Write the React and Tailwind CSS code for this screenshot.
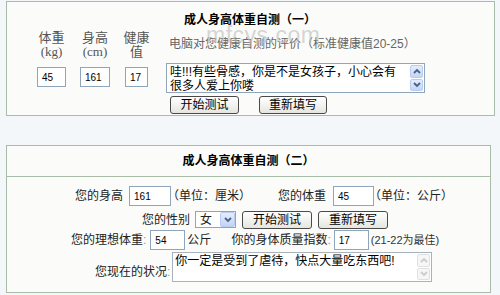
import React from "react";

const cjk = "[font-family:'Liberation_Sans','Noto_Sans_CJK_SC',sans-serif]";

const Input = ({ value, className = "" }) => (
  <div
    className={`h-[20px] border border-[#8ea5ba] bg-white flex items-center pl-[4px] text-[10px] text-black ${className}`}
  >
    {value}
  </div>
);

const Btn = ({ children, className = "" }) => (
  <div
    className={`h-[18px] rounded-[3px] border border-[#4a4a4a] bg-gradient-to-b from-white to-[#e6e6df] flex items-center justify-center text-[12px] leading-none text-black ${className}`}
  >
    {children}
  </div>
);

const Chevron = ({ up, color }) => (
  <svg width="8" height="6" viewBox="0 0 8 6">
    <path
      d={up ? "M1 5 L4 2 L7 5" : "M1 1 L4 4 L7 1"}
      fill="none"
      stroke={color}
      strokeWidth="1.8"
    />
  </svg>
);

const Scrollbar = ({ active }) => (
  <div className="w-[15px] flex flex-col gap-[1px] p-[1px]">
    {[true, false].map((up) => (
      <div
        key={up ? "u" : "d"}
        className={`flex-1 flex items-center justify-center rounded-[2px] border ${
          active
            ? "border-[#b9cdf2] bg-gradient-to-b from-[#e4edfc] to-[#c3d5f6]"
            : "border-[#e0e0e0] bg-[#f6f6f4]"
        }`}
      >
        <Chevron up={up} color={active ? "#4d6185" : "#c9ccd2"} />
      </div>
    ))}
  </div>
);

function BoxOne() {
  const cols = [
    { top: "体重", bottom: "(kg)", w: "w-[31px]", iw: "w-[29px]", v: "45" },
    { top: "身高", bottom: "(cm)", w: "w-[32px]", iw: "w-[30px]", v: "161" },
    { top: "健康", bottom: "值", w: "w-[27px]", iw: "w-[23px]", v: "17" },
  ];
  return (
    <div className="relative ml-[6px] mt-[1px] w-[489px] h-[115px] border border-[#a9bba9] bg-[#fbfcf9] flex">
      {/* left: metrics */}
      <div className="flex gap-[12px] pl-[29px] pt-[29px]">
        {cols.map((c) => (
          <div key={c.top} className={`${c.w} flex flex-col items-center`}>
            <div className="text-[13px] leading-[14px] text-[#555] text-center">{c.top}</div>
            <div className="text-[13px] leading-[14px] text-[#555] text-center [font-family:'Liberation_Serif','Noto_Sans_CJK_SC',serif]">
              {c.bottom}
            </div>
            <Input value={c.v} className={`${c.iw} mt-[8px]`} />
          </div>
        ))}
      </div>

      {/* right: result */}
      <div className="ml-[16px] w-[259px] flex flex-col">
        <div className="pt-[10px] pl-[18px] text-[12px] leading-[16px] font-bold text-black">
          成人身高体重自测（一）
        </div>
        <div className="mt-[8px] pl-[3px] text-[12px] leading-[16px] text-[#666] whitespace-nowrap">
          电脑对您健康自测的评价（标准健康值20-25）
        </div>
        <div className="mt-[11px] h-[30px] border border-[#8ea5ba] bg-white flex">
          <div className="flex-1 pl-[3px] pt-[1px] text-[12px] leading-[14px] text-black">
            哇!!!有些骨感，你是不是女孩子，小心会有
            <br />
            很多人爱上你喽
          </div>
          <Scrollbar active />
        </div>
        <div className="mt-[3px] pl-[4px] flex gap-[20px]">
          <Btn className="w-[69px]">开始测试</Btn>
          <Btn className="w-[68px]">重新填写</Btn>
        </div>
      </div>

      {/* watermark */}
      <div className="absolute left-[199px] top-[22px] text-[23px] leading-none text-[#bdbdbd] opacity-60 tracking-[0.5px] pointer-events-none">
        mfcys.com
      </div>
    </div>
  );
}

function BoxTwo() {
  return (
    <div className="ml-[6px] mt-[29px] w-[485px] h-[148px] border border-[#a9bba9] bg-[#fbfcf9] flex flex-col text-[12px] text-[#222]">
      <div className="h-[31px] border-b border-[#a9bba9] flex items-center justify-center font-bold text-black">
        成人身高体重自测（二）
      </div>

      {/* row 1 */}
      <div className="mt-[9px] h-[20px] pl-[68px] flex items-center whitespace-nowrap">
        <span>您的身高</span>
        <Input value="161" className="w-[42px] ml-[6px]" />
        <span className="ml-[-4px]">（单位：厘米）</span>
        <span className="ml-[27px]">您的体重</span>
        <Input value="45" className="w-[41px] ml-[7px]" />
        <span className="ml-[-5px]">（单位：公斤）</span>
      </div>

      {/* row 2 */}
      <div className="mt-[5px] h-[17px] pl-[135px] flex items-center whitespace-nowrap">
        <span>您的性别</span>
        <div className="ml-[5px] w-[41px] h-[17px] border border-[#8ea5ba] bg-white flex items-center">
          <span className="flex-1 pl-[4px]">女</span>
          <div className="w-[15px] h-[15px] rounded-[2px] border border-[#b9cdf2] bg-gradient-to-b from-[#e4edfc] to-[#c3d5f6] flex items-center justify-center">
            <Chevron up={false} color="#4d6185" />
          </div>
        </div>
        <Btn className="w-[70px] ml-[6px]">开始测试</Btn>
        <Btn className="w-[70px] ml-[6px]">重新填写</Btn>
      </div>

      {/* row 3 */}
      <div className="mt-[2px] h-[20px] pl-[64px] flex items-center whitespace-nowrap">
        <span>
          您的理想体重<span className="text-[#999]">: </span>
        </span>
        <Input value="54" className="w-[35px] ml-[4px]" />
        <span className="ml-[2px]">公斤</span>
        <span className="ml-[20px]">
          你的身体质量指数<span className="text-[#999]">: </span>
        </span>
        <Input value="17" className="w-[35px] ml-[3px]" />
        <span className="ml-[2px] text-[11px] text-[#333]">(21-22为最佳)</span>
      </div>

      {/* row 4 */}
      <div className="mt-[2px] pl-[88px] flex items-end whitespace-nowrap">
        <span className="pb-[1px]">
          您现在的状况<span className="text-[#999]">: </span>
        </span>
        <div className="ml-[2px] w-[260px] h-[30px] border border-[#a8b2bd] bg-white flex">
          <div className="flex-1 pl-[2px] pt-[1px] leading-[14px] text-black">
            你一定是受到了虐待，快点大量吃东西吧!
          </div>
          <Scrollbar />
        </div>
      </div>
    </div>
  );
}

export default function App() {
  return (
    <div className={`w-[500px] h-[295px] overflow-hidden bg-[#f3f7fa] ${cjk}`}>
      <BoxOne />
      <BoxTwo />
    </div>
  );
}
